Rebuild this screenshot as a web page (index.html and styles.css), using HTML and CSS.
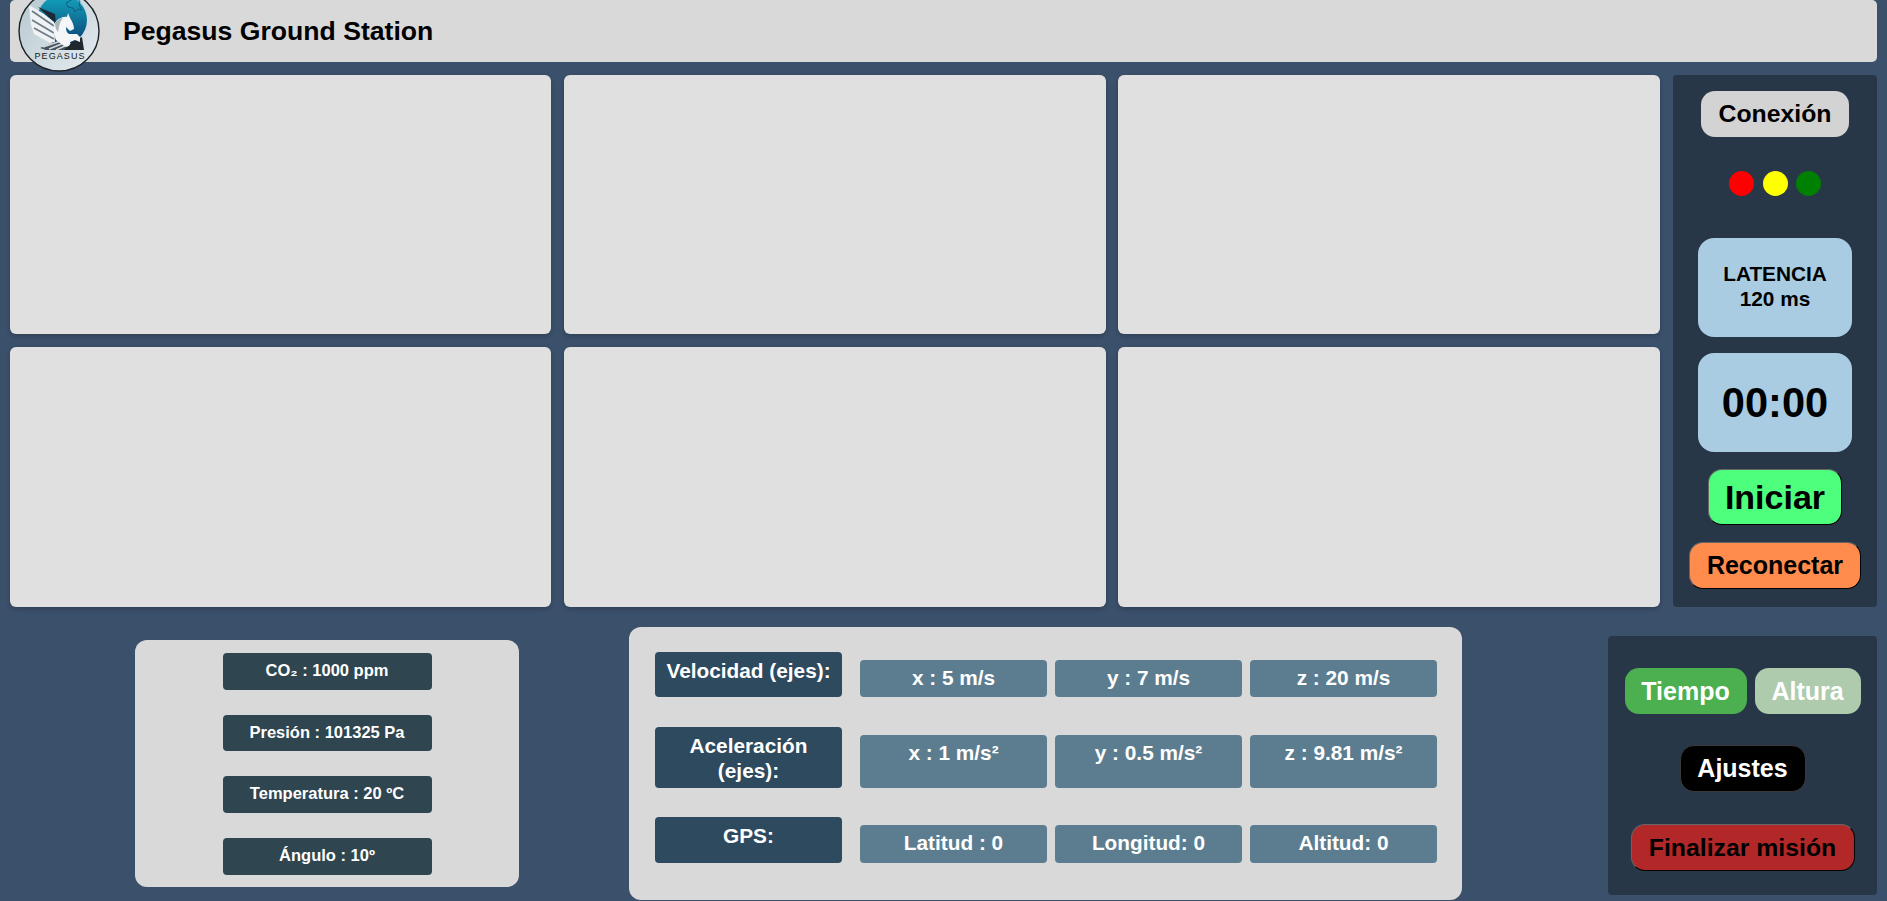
FILE: index.html
```html
<!DOCTYPE html>
<html>
  <head>
    <meta charset="UTF-8">
    <title>Pegasus Ground Station</title>
    <link rel="stylesheet" href="styles.css">
  </head>
  <body>
    <header class="top-bar">
      <svg class="logo" viewBox="0 0 82 82" width="82" height="82">
        <defs>
          <linearGradient id="logo-bg" x1="0" y1="0" x2="1" y2="1">
            <stop offset="0" stop-color="#b4c6ce"/>
            <stop offset="1" stop-color="#e6edf0"/>
          </linearGradient>
          <linearGradient id="logo-sky" x1="0" y1="0" x2="0" y2="1">
            <stop offset="0" stop-color="#12a5bd"/>
            <stop offset="1" stop-color="#0c3f74"/>
          </linearGradient>
          <clipPath id="logo-clip"><circle cx="41" cy="41" r="40"/></clipPath>
        </defs>
        <circle cx="41" cy="41" r="40" fill="url(#logo-bg)"/>
        <g clip-path="url(#logo-clip)">
          <circle cx="44" cy="30" r="25" fill="url(#logo-sky)"/>
          <path d="M48 13l9-5 5 3-1 4 3 5-4-1-3 3-2-4-5-1z" fill="none" stroke="#14507a" stroke-width="0.8"/>
          <path d="M20 17L37 24 38 34z" fill="#1c2a36"/>
          <path d="M11 15L26 24 36 32 37 52 32 53 16 44 13 35 12 26z" fill="#eef2f4"/>
          <path d="M14 21L36 36M14 30L36 43M16 38L36 49" stroke="#6d7b85" stroke-width="1.7"/>
          <path d="M22 58L44 49 60 60H28z" fill="#46525c"/>
          <path d="M25 57L43 51M31 59L46 53M38 60L49 55" stroke="#d3dbe0" stroke-width="1.4"/>
          <path d="M54 52L64 47 66 60H46z" fill="#20282e"/>
          <path d="M36 34C39 29 45 26 49 27L50 23 52 28C54 31 56 35 56 39L52 41 48 37C48 41 49 43 51 44L59 44 62 47 62 52 57 50 52 52C53 55 50 58 46 56L38 50C36 46 35 40 36 34Z" fill="#f4f6f7"/>
          <path d="M37 33C39 30 42 28 45 28 42 31 41 36 40 42 38 40 37 37 37 33Z" fill="#aab6bd"/>
        </g>
        <text class="logo-text" x="16.5" y="68.5" textLength="50" lengthAdjust="spacing">PEGASUS</text>
        <circle cx="41" cy="41" r="40" fill="none" stroke="#1d2226" stroke-width="1.4"/>
      </svg>
      <h1 class="app-title">Pegasus Ground Station</h1>
    </header>

    <main class="dashboard">
      <section class="charts">
        <div class="chart"></div>
        <div class="chart"></div>
        <div class="chart"></div>
        <div class="chart"></div>
        <div class="chart"></div>
        <div class="chart"></div>
      </section>
      <aside class="side-panel">
        <button class="btn btn-connection">Conexión</button>
        <div class="lights">
          <span class="light light-red"></span>
          <span class="light light-yellow"></span>
          <span class="light light-green"></span>
        </div>
        <div class="info-box latency">LATENCIA<br>120 ms</div>
        <div class="info-box timer">00:00</div>
        <button class="btn btn-outlined btn-start">Iniciar</button>
        <button class="btn btn-outlined btn-reconnect">Reconectar</button>
      </aside>
    </main>

    <footer class="bottom">
      <section class="sensors">
        <div class="sensor">CO₂ : 1000 ppm</div>
        <div class="sensor">Presión : 101325 Pa</div>
        <div class="sensor">Temperatura : 20 ºC</div>
        <div class="sensor">Ángulo : 10º</div>
      </section>

      <section class="telemetry">
        <div class="telemetry-row row-speed">
          <div class="row-label">Velocidad (ejes):</div>
          <div class="row-value">x : 5 m/s</div>
          <div class="row-value">y : 7 m/s</div>
          <div class="row-value">z : 20 m/s</div>
        </div>
        <div class="telemetry-row row-accel">
          <div class="row-label">Aceleración (ejes):</div>
          <div class="row-value">x : 1 m/s²</div>
          <div class="row-value">y : 0.5 m/s²</div>
          <div class="row-value">z : 9.81 m/s²</div>
        </div>
        <div class="telemetry-row row-gps">
          <div class="row-label">GPS:</div>
          <div class="row-value">Latitud : 0</div>
          <div class="row-value">Longitud: 0</div>
          <div class="row-value">Altitud: 0</div>
        </div>
      </section>

      <section class="actions">
        <div class="toggle-group">
          <button class="btn btn-time">Tiempo</button>
          <button class="btn btn-height">Altura</button>
        </div>
        <button class="btn btn-settings">Ajustes</button>
        <button class="btn btn-outlined btn-finish">Finalizar misión</button>
      </section>
    </footer>
  </body>
</html>
```

FILE: styles.css
```css
html, body {
  height: 100%;
}

body {
  margin: 0;
  padding: 0 10px;
  height: 901px;
  overflow: hidden;
  box-sizing: border-box;
  font-family: "Liberation Sans", Arial, sans-serif;
  font-weight: bold;
  background-color: #3b506b;
}

.top-bar {
  display: flex;
  align-items: center;
  height: 62px;
  padding-left: 8px;
  background-color: #d9d9d9;
  border-radius: 5px;
}

.logo {
  flex: none;
  margin-right: 23px;
}

.logo-text {
  font-family: "Liberation Sans", Arial, sans-serif;
  font-size: 9px;
  font-weight: normal;
  fill: #14181b;
}

.app-title {
  margin: 0;
  font-size: 26.6px;
  color: #000;
}

.dashboard {
  display: flex;
  gap: 13px;
  margin-top: 13px;
}

.charts {
  display: grid;
  flex: none;
  width: 1650px;
  grid-template-columns: 541px 542px 542px;
  grid-template-rows: 259px 260px;
  gap: 13px 12.5px;
}

.chart {
  background-color: #e0e0e0;
  border-radius: 6px;
  box-shadow: 0 2px 5px rgba(0, 0, 0, 0.2);
}

.side-panel {
  display: flex;
  flex-direction: column;
  align-items: center;
  width: 204px;
  height: 532px;
  padding-top: 16px;
  box-sizing: border-box;
  background-color: #283747;
  border-radius: 4px;
}

.btn {
  display: block;
  flex: none;
  margin: 0;
  padding: 0;
  border: none;
  font-family: inherit;
  font-weight: bold;
  color: #000;
  border-radius: 14px;
}

.btn-outlined {
  border: 1px solid;
  border-color: #666 #000 #000 #666;
}

.btn-connection {
  width: 148px;
  height: 46px;
  font-size: 24.8px;
  background-color: #d3d3d3;
}

.lights {
  display: flex;
  gap: 8.5px;
  margin: 34px 0 42px;
}

.light {
  width: 25px;
  height: 25px;
  border-radius: 50%;
}

.light-red {
  background-color: #ff0000;
}

.light-yellow {
  background-color: #ffff00;
}

.light-green {
  background-color: #008000;
}

.info-box {
  display: flex;
  align-items: center;
  justify-content: center;
  width: 154px;
  height: 99px;
  text-align: center;
  color: #000;
  background-color: #a9cce3;
  border-radius: 16px;
}

.latency {
  padding-bottom: 3px;
  box-sizing: border-box;
  font-size: 20.8px;
  line-height: 25px;
}

.timer {
  margin-top: 16px;
  font-size: 41.6px;
}

.btn-start {
  width: 134px;
  height: 56px;
  margin-top: 17px;
  font-size: 34px;
  background-color: #4dff7c;
}

.btn-reconnect {
  width: 172px;
  height: 47px;
  margin-top: 17px;
  font-size: 25px;
  background-color: #ff8c4d;
}

.bottom {
  display: flex;
  align-items: flex-start;
  margin-top: 20px;
}

.sensors {
  display: flex;
  flex-direction: column;
  align-items: center;
  gap: 25px;
  width: 384px;
  height: 247px;
  margin: 13px 110px 0 125px;
  padding-top: 13px;
  box-sizing: border-box;
  background-color: #d9d9d9;
  border-radius: 12px;
}

.sensor {
  width: 209px;
  height: 36.7px;
  padding-top: 8px;
  box-sizing: border-box;
  font-size: 16.5px;
  text-align: center;
  color: #fff;
  background-color: #2f4550;
  border-radius: 4px;
}

.telemetry {
  width: 833px;
  height: 273px;
  margin-right: 146px;
  padding: 25px 25px 0 26px;
  box-sizing: border-box;
  background-color: #d9d9d9;
  border-radius: 12px;
}

.telemetry-row {
  display: flex;
  align-items: flex-end;
  gap: 8px;
}

.row-speed {
  height: 45px;
}

.row-accel {
  height: 61px;
  margin-top: 30px;
}

.row-gps {
  height: 46px;
  margin-top: 29px;
}

.row-label {
  width: 187px;
  height: 100%;
  margin-right: 10px;
  padding: 6px 10px 0;
  box-sizing: border-box;
  font-size: 20.8px;
  line-height: 25px;
  text-align: center;
  color: #fff;
  background-color: #2e4a5f;
  border-radius: 4px;
}

.row-value {
  width: 187px;
  padding: 6px 0 7px;
  font-size: 20.8px;
  line-height: 24px;
  text-align: center;
  color: #fff;
  background-color: #5c7d8f;
  border-radius: 4px;
}

.row-accel .row-value {
  height: 53px;
  padding-bottom: 0;
  box-sizing: border-box;
}

.row-gps .row-value {
  height: 38px;
  box-sizing: border-box;
}

.actions {
  display: flex;
  flex-direction: column;
  align-items: center;
  width: 269px;
  height: 259px;
  margin-top: 9px;
  padding-top: 32px;
  box-sizing: border-box;
  background-color: #283747;
  border-radius: 4px;
}

.toggle-group {
  display: flex;
  gap: 8px;
}

.actions .btn {
  height: 46px;
  font-size: 25px;
  color: #fff;
}

.btn-time {
  width: 122px;
  background-color: #4caf50;
}

.btn-height {
  width: 106px;
  background-color: #aecbae;
}

.actions .btn-settings {
  width: 126px;
  height: 47px;
  margin-top: 31px;
  background-color: #000;
  border: 1px solid #3a3a3a;
}

.actions .btn-finish {
  width: 224px;
  height: 47px;
  margin-top: 32px;
  font-size: 24.8px;
  color: #000;
  background-color: #b22727;
}
```
